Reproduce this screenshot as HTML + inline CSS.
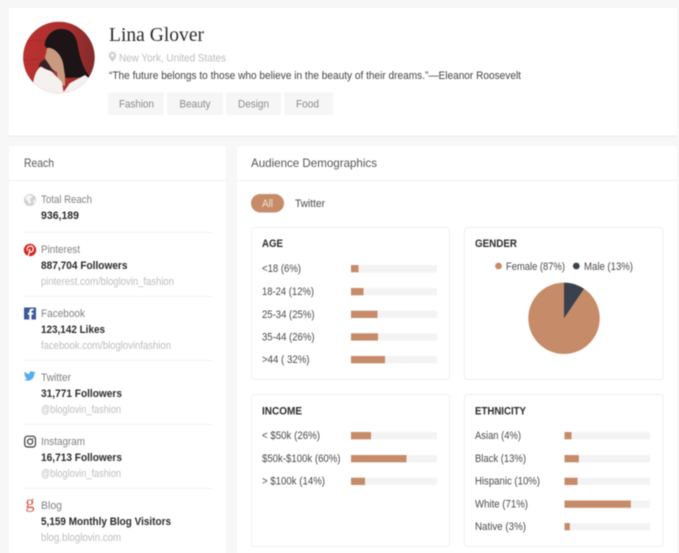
<!DOCTYPE html>
<html><head><meta charset="utf-8">
<style>
html,body{margin:0;padding:0;width:679px;height:553px;overflow:hidden;background:#f7f7f7}
svg{display:block;filter:blur(.4px)}
text{font-family:"Liberation Sans",sans-serif;font-size:10.8px;fill:#4a4a4a}
.b{font-weight:bold;fill:#2b2b2b}
.g{fill:#bdbdbd}
.m{fill:#808080}
.t{font-weight:bold;fill:#2b2b2b;font-size:10.8px}
.tag{fill:#8a8a8a}
.h{font-size:12px;fill:#555}
</style></head><body>
<svg width="679" height="553" viewBox="0 0 679 553" xmlns="http://www.w3.org/2000/svg">
<defs>
<clipPath id="av"><circle cx="58.9" cy="57.5" r="35.8"/></clipPath>
<linearGradient id="red" x1="0" y1="0" x2="1" y2="0"><stop offset="0" stop-color="#bb3230"/><stop offset=".6" stop-color="#ab2f2f"/><stop offset="1" stop-color="#7c2a2b"/></linearGradient>
</defs>
<!-- cards -->
<rect x="9" y="8" width="668" height="127.5" fill="#fff"/>
<rect x="9" y="135.5" width="668" height="1" fill="#e9e9e9"/>
<rect x="9" y="146" width="217" height="407" fill="#fff"/>
<rect x="237" y="146" width="440" height="407" fill="#fff"/>
<rect x="9" y="180" width="217" height="1" fill="#f2f2f2"/>
<rect x="237" y="180" width="440" height="1" fill="#f2f2f2"/>

<!-- avatar -->
<g clip-path="url(#av)">
<rect x="20" y="20" width="78" height="78" fill="url(#red)"/>
<path d="M20 41 L46 40 M20 60 L42 59" stroke="#a02a2a" stroke-width=".8" fill="none"/>
<path d="M39 67 C39 62 43 60 46 59 L55 72 L44 70 Z" fill="#3a2224"/>
<path d="M44.5 45 C46 35 53 29 61 29 C70 29 75 34 77 42 C79 52 81 66 90 77 L66 78 L60 70 L48 50 Z" fill="#1c1416"/>
<path d="M47 48 C50 47 54 49 57 52 C60 55 62 59 63 63 C64 67 64 71 65 75 L65 86 L58 84 L57 72 C53 71 51 68 49.5 65 C47.5 62 45 59.5 45 57 C46 54 46.5 51 47 48Z" fill="#c99a80"/>
<path d="M33 84 C34 76 36 70 41 66.5 C45 69 48 70 51 71 C54 74 58 78 62 82 L63.5 92 L70 83 L85 75 L96 84 L96 100 L33 100 Z" fill="#f4f1ee"/>
<path d="M80 88 L90 80 L94 90 L84 96 Z" fill="#ddd8d4"/>
</g>

<!-- header text -->
<text x="109" y="41" textLength="95" lengthAdjust="spacing" style="font-family:'Liberation Serif',serif;font-size:19.5px;fill:#2b2b2b">Lina Glover</text>
<path d="M112.5 51.5a3.8 3.8 0 0 0-3.8 3.8c0 2.6 3.8 6.7 3.8 6.7s3.8-4.1 3.8-6.7a3.8 3.8 0 0 0-3.8-3.8zm0 5.2a1.4 1.4 0 1 1 0-2.8 1.4 1.4 0 0 1 0 2.8z" fill="#d2d2d2"/>
<text x="119" y="61.5" textLength="107" lengthAdjust="spacingAndGlyphs" class="g" style="font-size:11px">New York, United States</text>
<text x="109" y="79" textLength="412" lengthAdjust="spacingAndGlyphs" style="fill:#444">“The future belongs to those who believe in the beauty of their dreams.”—Eleanor Roosevelt</text>
<rect x="108" y="92.5" width="56" height="22.5" rx="2" fill="#f6f6f6"/>
<rect x="167" y="92.5" width="56" height="22.5" rx="2" fill="#f6f6f6"/>
<rect x="226" y="92.5" width="55" height="22.5" rx="2" fill="#f6f6f6"/>
<rect x="284" y="92.5" width="49" height="22.5" rx="2" fill="#f6f6f6"/>
<text x="119" y="107.5" textLength="35" lengthAdjust="spacingAndGlyphs" class="tag">Fashion</text>
<text x="179.5" y="107.5" textLength="31" lengthAdjust="spacingAndGlyphs" class="tag">Beauty</text>
<text x="238" y="107.5" textLength="31" lengthAdjust="spacingAndGlyphs" class="tag">Design</text>
<text x="296" y="107.5" textLength="23" lengthAdjust="spacingAndGlyphs" class="tag">Food</text>

<!-- reach -->
<text x="24" y="167" textLength="30" lengthAdjust="spacingAndGlyphs" class="h">Reach</text>
<g fill="#f2f2f2"><rect x="23" y="232" width="189" height="1"/><rect x="23" y="296" width="189" height="1"/><rect x="23" y="360" width="189" height="1"/><rect x="23" y="424" width="189" height="1"/><rect x="23" y="488" width="189" height="1"/></g>

<!-- globe -->
<circle cx="30" cy="200" r="6" fill="#cfcfcf"/>
<path d="M27 195.5 L31 195 L33 197 L30 199 L31.5 202 L29.5 205 L27.5 201 L25 199 Z" fill="#f4f4f4"/>
<path d="M33.5 200 L35.5 199.5 L35 203 L33 203.5 Z" fill="#f4f4f4"/>
<!-- pinterest -->
<circle cx="30" cy="250" r="6.2" fill="#d6281f"/>
<path d="M28.3 256 L30 249 M27.5 250.8 C26.5 247.5 28.5 246 30.3 246 C32.5 246 33.5 247.5 33.2 249.5 C32.8 251.8 30.8 252.8 29.5 251.7" fill="none" stroke="#fff" stroke-width="1.2"/>
<!-- facebook -->
<rect x="24" y="307.5" width="12" height="12" fill="#3b5a9a"/>
<path d="M31.5 319.5 V314.6 H33.2 L33.5 312.7 H31.5 V311.5 C31.5 310.9 31.8 310.5 32.5 310.5 H33.6 V308.8 H32 C30.3 308.8 29.3 309.8 29.3 311.3 V312.7 H27.8 V314.6 H29.3 V319.5 Z" fill="#fff"/>
<!-- twitter -->
<path d="M35.6 372.4 C35.1 372.6 34.6 372.8 34.2 372.9 C34.8 372.5 35.1 372 35.3 371.4 C34.8 371.7 34.2 372 33.6 372.1 C33.1 371.6 32.4 371.2 31.7 371.2 C30.2 371.2 29.1 372.5 29.4 374 C27.5 373.9 25.8 373 24.7 371.6 C24.1 372.7 24.4 374 25.4 374.7 C25 374.7 24.7 374.6 24.3 374.4 C24.3 375.6 25.1 376.6 26.2 376.8 C25.9 376.9 25.5 376.9 25.2 376.9 C25.5 377.9 26.4 378.6 27.4 378.6 C26.4 379.4 25.1 379.7 23.9 379.6 C25 380.3 26.3 380.7 27.6 380.7 C32 380.7 34.5 377 34.3 373.6 C34.8 373.3 35.3 372.9 35.6 372.4 Z" fill="#55acee"/>
<!-- instagram -->
<rect x="24.7" y="436.2" width="10.8" height="10.8" rx="2.8" fill="none" stroke="#3a3a3a" stroke-width="1.2"/>
<circle cx="30.1" cy="441.6" r="2.6" fill="none" stroke="#3a3a3a" stroke-width="1.2"/>
<circle cx="33" cy="438.7" r=".6" fill="#3a3a3a"/>
<!-- blog g -->
<text x="25.5" y="508" style="font-family:'Liberation Serif',serif;font-size:18px;fill:#dc4e41">g</text>

<text x="41" y="203" textLength="51" lengthAdjust="spacingAndGlyphs" class="m">Total Reach</text>
<text x="41" y="219" textLength="38" lengthAdjust="spacingAndGlyphs" class="b">936,189</text>
<text x="41" y="253" textLength="39" lengthAdjust="spacingAndGlyphs" class="m">Pinterest</text>
<text x="41" y="269" textLength="86.5" lengthAdjust="spacingAndGlyphs" class="b">887,704 Followers</text>
<text x="41" y="285" textLength="133" lengthAdjust="spacingAndGlyphs" class="g">pinterest.com/bloglovin_fashion</text>
<text x="41" y="317" textLength="44" lengthAdjust="spacingAndGlyphs" class="m">Facebook</text>
<text x="41" y="333" textLength="64" lengthAdjust="spacingAndGlyphs" class="b">123,142 Likes</text>
<text x="41" y="349" textLength="130" lengthAdjust="spacingAndGlyphs" class="g">facebook.com/bloglovinfashion</text>
<text x="41" y="381" textLength="30" lengthAdjust="spacingAndGlyphs" class="m">Twitter</text>
<text x="41" y="397" textLength="81" lengthAdjust="spacingAndGlyphs" class="b">31,771 Followers</text>
<text x="41" y="413" textLength="80" lengthAdjust="spacingAndGlyphs" class="g">@bloglovin_fashion</text>
<text x="41" y="445" textLength="44" lengthAdjust="spacingAndGlyphs" class="m">Instagram</text>
<text x="41" y="461" textLength="81" lengthAdjust="spacingAndGlyphs" class="b">16,713 Followers</text>
<text x="41" y="477" textLength="80" lengthAdjust="spacingAndGlyphs" class="g">@bloglovin_fashion</text>
<text x="41" y="509" textLength="21" lengthAdjust="spacingAndGlyphs" class="m">Blog</text>
<text x="41" y="525" textLength="130" lengthAdjust="spacingAndGlyphs" class="b">5,159 Monthly Blog Visitors</text>
<text x="41" y="541" textLength="80" lengthAdjust="spacingAndGlyphs" class="g">blog.bloglovin.com</text>

<!-- demographics -->
<text x="251" y="167" textLength="126" lengthAdjust="spacingAndGlyphs" class="h">Audience Demographics</text>
<rect x="251" y="194" width="33" height="18.5" rx="9.2" fill="#c68b68"/>
<text x="262" y="207" textLength="11" lengthAdjust="spacingAndGlyphs" style="fill:#f3e4da">All</text>
<text x="295" y="207" textLength="30" lengthAdjust="spacingAndGlyphs">Twitter</text>

<g fill="#fff" stroke="#efefef">
<rect x="251.5" y="227.5" width="198" height="152" rx="3"/>
<rect x="464.5" y="227.5" width="198.5" height="152" rx="3"/>
<rect x="251.5" y="394.5" width="198" height="152" rx="3"/>
<rect x="464.5" y="394.5" width="198.5" height="152" rx="3"/>
</g>

<text x="262" y="247" textLength="21" lengthAdjust="spacingAndGlyphs" class="t">AGE</text>
<text x="262" y="272" textLength="39" lengthAdjust="spacingAndGlyphs">&lt;18 (6%)</text>
<text x="262" y="295" textLength="52" lengthAdjust="spacingAndGlyphs">18-24 (12%)</text>
<text x="262" y="318" textLength="52.5" lengthAdjust="spacingAndGlyphs">25-34 (25%)</text>
<text x="262" y="340.5" textLength="52.5" lengthAdjust="spacingAndGlyphs">35-44 (26%)</text>
<text x="262" y="363" textLength="47.5" lengthAdjust="spacingAndGlyphs">&gt;44 ( 32%)</text>
<g fill="#f3f3f3">
<rect x="351" y="265" width="86" height="7.3"/><rect x="351" y="288" width="86" height="7.3"/><rect x="351" y="310.7" width="86" height="7.3"/><rect x="351" y="333.3" width="86" height="7.3"/><rect x="351" y="356" width="86" height="7.3"/>
<rect x="351" y="432" width="86" height="7.3"/><rect x="351" y="455" width="86" height="7.3"/><rect x="351" y="477.7" width="86" height="7.3"/>
<rect x="564.5" y="432" width="85.5" height="7.3"/><rect x="564.5" y="455" width="85.5" height="7.3"/><rect x="564.5" y="477.7" width="85.5" height="7.3"/><rect x="564.5" y="500.5" width="85.5" height="7.3"/><rect x="564.5" y="523" width="85.5" height="7.3"/>
</g>
<g fill="#c68b68">
<rect x="351" y="265" width="7.5" height="7.3"/><rect x="351" y="288" width="12.5" height="7.3"/><rect x="351" y="310.7" width="26.5" height="7.3"/><rect x="351" y="333.3" width="27" height="7.3"/><rect x="351" y="356" width="34" height="7.3"/>
<rect x="351" y="432" width="20" height="7.3"/><rect x="351" y="455" width="55.5" height="7.3"/><rect x="351" y="477.7" width="14" height="7.3"/>
<rect x="564.5" y="432" width="7" height="7.3"/><rect x="564.5" y="455" width="14.3" height="7.3"/><rect x="564.5" y="477.7" width="13" height="7.3"/><rect x="564.5" y="500.5" width="66.3" height="7.3"/><rect x="564.5" y="523" width="5.3" height="7.3"/>
</g>

<text x="475" y="247" textLength="42" lengthAdjust="spacingAndGlyphs" class="t">GENDER</text>
<circle cx="498.5" cy="266" r="3.4" fill="#c68b68"/>
<text x="506" y="270" textLength="59" lengthAdjust="spacingAndGlyphs">Female (87%)</text>
<circle cx="576.3" cy="266" r="3.4" fill="#39414f"/>
<text x="584" y="270" textLength="49" lengthAdjust="spacingAndGlyphs">Male (13%)</text>
<circle cx="564" cy="318.3" r="35.7" fill="#c68b68"/>
<path d="M564 318.3 V282.6 A35.7 35.7 0 0 1 584 288.7 Z" fill="#39414f"/>

<text x="262" y="414.5" textLength="40" lengthAdjust="spacingAndGlyphs" class="t">INCOME</text>
<text x="262" y="439" textLength="58" lengthAdjust="spacingAndGlyphs">&lt; $50k (26%)</text>
<text x="262" y="462" textLength="78.5" lengthAdjust="spacingAndGlyphs">$50k-$100k (60%)</text>
<text x="262" y="484.5" textLength="63" lengthAdjust="spacingAndGlyphs">&gt; $100k (14%)</text>

<text x="475" y="414.5" textLength="51" lengthAdjust="spacingAndGlyphs" class="t">ETHNICITY</text>
<text x="475" y="439" textLength="46" lengthAdjust="spacingAndGlyphs">Asian (4%)</text>
<text x="475" y="462" textLength="51" lengthAdjust="spacingAndGlyphs">Black (13%)</text>
<text x="475" y="484.5" textLength="65" lengthAdjust="spacingAndGlyphs">Hispanic (10%)</text>
<text x="475" y="507.5" textLength="53" lengthAdjust="spacingAndGlyphs">White (71%)</text>
<text x="475" y="530" textLength="51" lengthAdjust="spacingAndGlyphs">Native (3%)</text>
</svg>
</body></html>
